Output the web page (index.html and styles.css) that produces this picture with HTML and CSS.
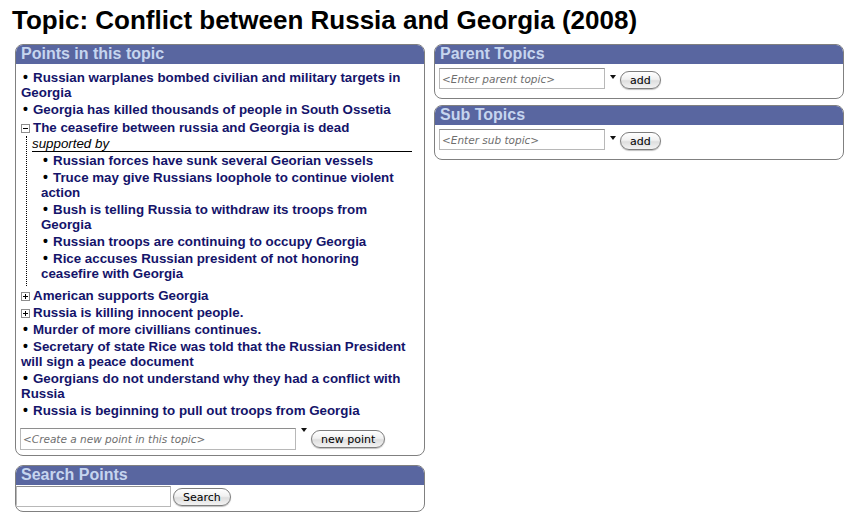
FILE: index.html
```html
<!DOCTYPE html>
<html>
<head>
<meta charset="utf-8">
<title>Topic: Conflict between Russia and Georgia (2008)</title>
<link rel="stylesheet" href="styles.css">
</head>
<body>
<div class="page">
  <h1 class="title">Topic: Conflict between Russia and Georgia (2008)</h1>
  <div class="cols">
    <div class="col">
      <div class="box box-points">
        <div class="box-h">Points in this topic</div>
        <ul class="points">
          <li><span class="b">•</span><a href="#">Russian warplanes bombed civilian and military targets in Georgia</a></li>
          <li><span class="b">•</span><a href="#">Georgia has killed thousands of people in South Ossetia</a></li>
          <li class="open"><span class="tog"><svg width="9" height="9" viewBox="0 0 9 9"><rect x="0.5" y="0.5" width="8" height="8" fill="#fff" stroke="#8c8c8c"/><path d="M2 4.5h5" stroke="#000" stroke-width="1"/></svg></span><a href="#">The ceasefire between russia and Georgia is dead</a>
            <div class="nested">
              <div class="sup">supported by</div>
              <ul class="sub">
                <li><span class="b">•</span><a href="#">Russian forces have sunk several Georian vessels</a></li>
                <li><span class="b">•</span><a href="#">Truce may give Russians loophole to continue violent action</a></li>
                <li><span class="b">•</span><a href="#">Bush is telling Russia to withdraw its troops from Georgia</a></li>
                <li><span class="b">•</span><a href="#">Russian troops are continuing to occupy Georgia</a></li>
                <li><span class="b">•</span><a href="#">Rice accuses Russian president of not honoring ceasefire with Georgia</a></li>
              </ul>
            </div>
          </li>
          <li><span class="tog"><svg width="9" height="9" viewBox="0 0 9 9"><rect x="0.5" y="0.5" width="8" height="8" fill="#fff" stroke="#8c8c8c"/><path d="M2 4.5h5M4.5 2v5" stroke="#000" stroke-width="1"/></svg></span><a href="#">American supports Georgia</a></li>
          <li><span class="tog"><svg width="9" height="9" viewBox="0 0 9 9"><rect x="0.5" y="0.5" width="8" height="8" fill="#fff" stroke="#8c8c8c"/><path d="M2 4.5h5M4.5 2v5" stroke="#000" stroke-width="1"/></svg></span><a href="#">Russia is killing innocent people.</a></li>
          <li><span class="b">•</span><a href="#">Murder of more civillians continues.</a></li>
          <li><span class="b">•</span><a href="#">Secretary of state Rice was told that the Russian President will sign a peace document</a></li>
          <li><span class="b">•</span><a href="#">Georgians do not understand why they had a conflict with Russia</a></li>
          <li><span class="b">•</span><a href="#">Russia is beginning to pull out troops from Georgia</a></li>
        </ul>
        <div class="row row-new">
          <input class="combo combo-wide" type="text" placeholder="<Create a new point in this topic>">
          <span class="arrow"></span>
          <button class="pill" type="button">new point</button>
        </div>
      </div>
      <div class="box box-search">
        <div class="box-h">Search Points</div>
        <div class="row row-search">
          <input class="search-in" type="text">
          <button class="pill" type="button">Search</button>
        </div>
      </div>
    </div>
    <div class="col">
      <div class="box">
        <div class="box-h">Parent Topics</div>
        <div class="row row-side">
          <input class="combo" type="text" placeholder="<Enter parent topic>">
          <span class="arrow"></span>
          <button class="pill" type="button">add</button>
        </div>
      </div>
      <div class="box box-gap">
        <div class="box-h">Sub Topics</div>
        <div class="row row-side">
          <input class="combo" type="text" placeholder="<Enter sub topic>">
          <span class="arrow"></span>
          <button class="pill" type="button">add</button>
        </div>
      </div>
    </div>
  </div>
</div>
</body>
</html>
```

FILE: styles.css
```css
html, body {
  margin: 0;
  padding: 0;
  background: #fff;
}
body {
  font-family: "Liberation Sans", Arial, Helvetica, sans-serif;
  color: #000;
}
.page {
  padding: 0 0 0 15px;
}
.title {
  margin: 0 0 9px -3px;
  padding-top: 6px;
  font-size: 26px;
  line-height: 29px;
  font-weight: bold;
}
.cols {
  display: flex;
  gap: 9px;
  align-items: flex-start;
}
.col {
  width: 410px;
  display: flex;
  flex-direction: column;
}
.box {
  border: 1px solid #808080;
  border-radius: 8px;
  overflow: hidden;
  background: #fff;
}
.box-gap {
  margin-top: 6px;
}
.box-search {
  margin-top: 9px;
}
.box-h {
  background: #5966a0;
  color: #c6d5ef;
  font-weight: bold;
  font-size: 16px;
  line-height: 18px;
  height: 19px;
  padding-left: 5px;
}
.points, .sub {
  list-style: none;
  margin: 0;
  padding: 0;
}
.points {
  padding: 6px 12px 0 5px;
  font-size: 13.33px;
  font-weight: bold;
  line-height: 15px;
}
.points li {
  margin-bottom: 2px;
}
.points li.open {
  margin-top: 3px;
}
.points a {
  color: #14146a;
  text-decoration: none;
}
.b {
  display: inline-block;
  width: 10px;
  padding-left: 2px;
  font-size: 14px;
}
.tog {
  display: inline-block;
  width: 12px;
}
.tog svg {
  display: inline-block;
  vertical-align: -1px;
}
.nested {
  margin: 1px 0 0 5px;
  padding: 0 0 3px 5px;
  border-left: 1px dotted #000;
}
.sup {
  font-weight: normal;
  font-style: italic;
  color: #000;
  border-bottom: 1px solid #000;
  margin-right: 0;
}
.sub {
  padding: 1px 0 0 9px;
}
.row {
  display: flex;
  align-items: flex-start;
}
.row-new {
  padding: 8px 4px 5px 4px;
}
.row-side {
  padding: 4px 4px 9px 4px;
}
.row-search {
  padding: 1px 0 4px 0;
}
.combo, .search-in {
  box-sizing: border-box;
  height: 21px;
  margin: 0;
  border: 1px solid #b8b8b8;
  border-top-color: #8e8e8e;
  background: #fff;
  padding: 0 2px;
  font-family: "DejaVu Sans", sans-serif;
  font-size: 10.5px;
  outline: none;
}
.combo {
  width: 166px;
}
.combo-wide {
  width: 276px;
  height: 22px;
}
.search-in {
  width: 155px;
}
.combo::placeholder {
  color: #6e6e6e;
  font-style: italic;
  opacity: 1;
}
.arrow {
  width: 0;
  height: 0;
  margin: 7px 4px 0 5px;
  border-left: 3px solid transparent;
  border-right: 3px solid transparent;
  border-top: 4px solid #111;
}
.row-new .arrow {
  margin-top: 0;
  margin-left: 5px;
}
.pill {
  box-sizing: border-box;
  height: 18px;
  margin-top: 2px;
  padding: 0 9px;
  border: 1px solid #7d7d7d;
  border-radius: 9px;
  background: linear-gradient(#ffffff 0%, #f1f1f1 45%, #dedede 55%, #f3f3f3 100%);
  box-shadow: 0 1px 1px rgba(0,0,0,0.25);
  font-family: "DejaVu Sans", sans-serif;
  font-size: 11px;
  line-height: 15px;
  color: #000;
}
.row-side .pill {
  margin-top: 3px;
}
.row-search .pill {
  margin-left: 2px;
  margin-top: 2px;
}
```
